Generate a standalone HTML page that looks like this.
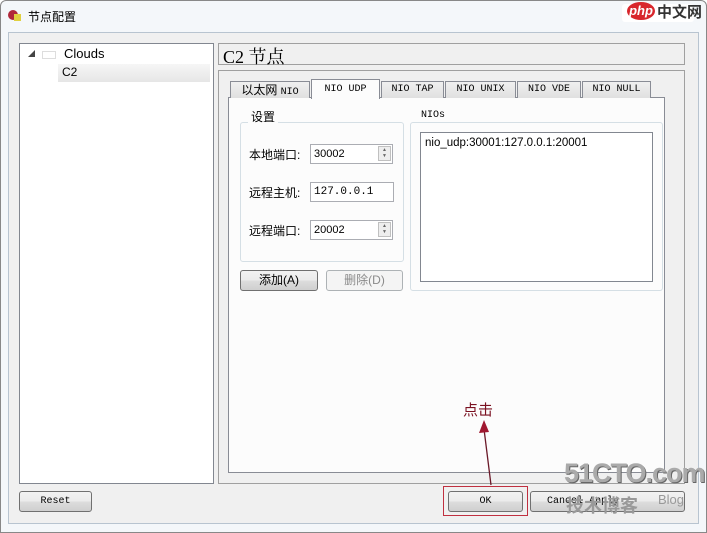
<!DOCTYPE html>
<html><head><meta charset="utf-8"><style>
*{box-sizing:border-box;margin:0;padding:0}
body{width:707px;height:533px;overflow:hidden;background:#fff;font-family:"Liberation Sans","Noto Sans CJK SC",sans-serif;font-size:12px;color:#000;position:relative}
.a{position:absolute}
.mono{font-family:"Liberation Mono","Noto Sans CJK SC",monospace;font-size:10px}
.btn{position:absolute;border:1px solid #707070;border-radius:3px;background:linear-gradient(#f2f2f2,#ebebeb 50%,#dddddd 51%,#cfcfcf);text-align:center}
.inp{position:absolute;background:#fff;border:1px solid #abadb3;font-size:11px;padding-left:3px;line-height:18px}
.tab{position:absolute;top:81px;height:17px;border:1px solid #898c95;border-bottom:none;background:linear-gradient(#f0f0f0,#e0e0e0);text-align:center;line-height:16px}
.spin{position:absolute;right:1px;top:1px;width:13px;height:15px;border:1px solid #c0c0c0;background:#eee;font-size:5px;line-height:6px;text-align:center;color:#666}
</style></head><body>
<div class="a" style="left:0;top:0;width:707px;height:533px;background:#f4f7fa;border:1px solid #888;border-radius:6px 6px 0 0"></div>
<div class="a" style="left:8px;top:10px;width:10px;height:10px;border-radius:50%;background:#b0283a"></div>
<div class="a" style="left:14px;top:14px;width:7px;height:7px;background:#e0d040"></div>
<div class="a" style="left:28px;top:8px;font-size:12px">节点配置</div>
<div class="a" style="left:8px;top:32px;width:691px;height:492px;background:#f0f0f0;border:1px solid #b8c4d0"></div>
<!-- tree -->
<div class="a" style="left:19px;top:43px;width:195px;height:441px;background:#fff;border:1px solid #828790"></div>
<div class="a" style="left:28px;top:49px;font-size:7px;color:#444">◢</div>
<div class="a" style="left:42px;top:51px;width:14px;height:8px;border:1px solid #ddd"></div>
<div class="a" style="left:64px;top:46px;font-size:13px">Clouds</div>
<div class="a" style="left:58px;top:64px;width:152px;height:18px;background:linear-gradient(#f6f6f6,#e6e6e6)"></div>
<div class="a" style="left:62px;top:65px;font-size:12px">C2</div>
<!-- header -->
<div class="a" style="left:218px;top:43px;width:467px;height:22px;background:#f0f0f0;border:1px solid #a0a0a0"></div>
<div class="a" style="left:223px;top:43px;font-size:18px;font-family:'Liberation Serif','Noto Serif CJK SC',serif">C2 节点</div>
<!-- right panel -->
<div class="a" style="left:218px;top:70px;width:467px;height:414px;border:1px solid #a0a0a0"></div>
<div class="a" style="left:228px;top:97px;width:437px;height:376px;background:#fcfcfc;border:1px solid #898c95"></div>
<div class="tab" style="left:230px;width:80px">以太网 <span class="mono">NIO</span></div>
<div class="tab mono" style="left:311px;top:79px;height:20px;width:69px;background:#fcfcfc;line-height:20px">NIO UDP</div>
<div class="tab mono" style="left:381px;width:63px">NIO TAP</div>
<div class="tab mono" style="left:445px;width:71px">NIO UNIX</div>
<div class="tab mono" style="left:517px;width:64px">NIO VDE</div>
<div class="tab mono" style="left:582px;width:69px">NIO NULL</div>
<!-- settings group -->
<div class="a" style="left:240px;top:122px;width:164px;height:140px;border:1px solid #d5dfe5;border-radius:3px"></div>
<div class="a" style="left:248px;top:108px;background:#fcfcfc;padding:0 3px;font-size:12px">设置</div>
<div class="a" style="left:249px;top:146px">本地端口:</div>
<div class="inp" style="left:310px;top:144px;width:83px;height:20px">30002<div class="spin">▲<br>▼</div></div>
<div class="a" style="left:249px;top:184px">远程主机:</div>
<div class="inp" style="left:310px;top:182px;width:84px;height:20px;font-family:'Liberation Mono',monospace">127.0.0.1</div>
<div class="a" style="left:249px;top:222px">远程端口:</div>
<div class="inp" style="left:310px;top:220px;width:83px;height:20px">20002<div class="spin">▲<br>▼</div></div>
<div class="btn" style="left:240px;top:270px;width:78px;height:21px;line-height:19px">添加(A)</div>
<div class="btn" style="left:326px;top:270px;width:77px;height:21px;line-height:19px;color:#8a8a8a;border-color:#adb2b5;background:#f4f4f4">删除(D)</div>
<!-- NIOs group -->
<div class="a" style="left:410px;top:122px;width:253px;height:169px;border:1px solid #d5dfe5;border-radius:3px"></div>
<div class="a mono" style="left:418px;top:110px;background:#fcfcfc;padding:0 3px">NIOs</div>
<div class="a" style="left:420px;top:132px;width:233px;height:150px;background:#fff;border:1px solid #828790"></div>
<div class="a" style="left:425px;top:137px;font-size:11.5px">nio_udp:30001:127.0.0.1:20001</div>
<!-- bottom buttons -->
<div class="btn mono" style="left:19px;top:491px;width:73px;height:21px;line-height:19px">Reset</div>
<div class="a" style="left:443px;top:486px;width:85px;height:30px;border:1px solid #c03040"></div>
<div class="btn mono" style="left:448px;top:491px;width:75px;height:21px;line-height:19px">OK</div>
<div class="btn mono" style="left:530px;top:491px;width:155px;height:21px;line-height:19px;text-align:left;padding-left:16px">Cancel    Apply</div>
<!-- annotation -->
<div class="a" style="left:463px;top:399px;font-size:15px;color:#7a1020">点击</div>
<svg class="a" style="left:470px;top:415px" width="40" height="75"><line x1="21" y1="70" x2="14" y2="14" stroke="#6a1828" stroke-width="1.3"/><polygon points="14,5 9,18 19,17" fill="#a01830"/></svg>
<!-- watermarks -->
<div class="a" style="left:622px;top:4px;width:72px;height:18px;background:#fff;border-radius:3px"></div>
<div class="a" style="left:627px;top:2px;width:28px;height:18px;background:#d8262c;border-radius:50%;color:#fff;font-size:13px;font-weight:bold;text-align:center;line-height:17px;font-style:italic">php</div>
<div class="a" style="left:657px;top:1px;font-size:15px;font-weight:bold;color:#333">中文网</div>
<div class="a" style="left:564px;top:458px;font-size:27px;font-weight:bold;color:#aaa;letter-spacing:-1px;text-shadow:1px 1px 0 #666">51CTO.com</div>
<div class="a" style="left:566px;top:492px;font-size:18px;color:#999;font-weight:bold">技术博客</div>
<div class="a" style="left:658px;top:492px;font-size:13px;color:#999">Blog</div>
</body></html>
